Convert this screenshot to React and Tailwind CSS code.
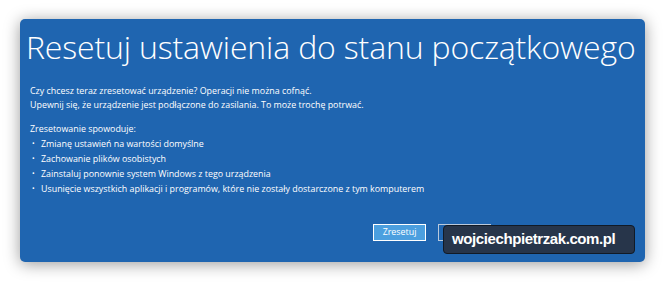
export default function App() {
  const items = [
    "Zmianę ustawień na wartości domyślne",
    "Zachowanie plików osobistych",
    "Zainstaluj ponownie system Windows z tego urządzenia",
    "Usunięcie wszystkich aplikacji i programów, które nie zostały dostarczone z tym komputerem",
  ];

  return (
    <div className="w-[665px] h-[283px] bg-white pl-[20px] pt-[19px] font-['Open_Sans',sans-serif]">
      <div className="relative w-[625px] h-[243px] rounded-[5px] bg-[#1f65b0] text-white shadow-[0_2px_16px_rgba(0,0,0,0.4)] flex flex-col">
        <h1 className="pl-[6px] pt-[8px] text-[32px] leading-[40px] font-light tracking-[-0.15px] whitespace-nowrap">
          Resetuj ustawienia do stanu początkowego
        </h1>

        <div className="pl-[10px] pt-[17px] text-[8.9px] leading-[14px]">
          <p>Czy chcesz teraz zresetować urządzenie? Operacji nie można cofnąć.</p>
          <p>Upewnij się, że urządzenie jest podłączone do zasilania. To może trochę potrwać.</p>
        </div>

        <div className="pl-[10px] pt-[9px] text-[8.9px] leading-[15px]">
          <p>Zresetowanie spowoduje:</p>
          <ul>
            {items.map((item) => (
              <li key={item} className="flex items-center">
                <span className="w-[11px] pl-[2px] text-[7px]">•</span>
                <span>{item}</span>
              </li>
            ))}
          </ul>
        </div>

        <div className="flex-1" />

        <div className="flex justify-end gap-[12px] pr-[154px] pb-[21px]">
          <button className="w-[53px] h-[17px] border border-white bg-[#4b9fdf] text-[8.9px] leading-none text-white">
            Zresetuj
          </button>
          <button className="w-[53px] h-[17px] border border-[#b9c9dc] text-[8.9px] leading-none text-[#8d9fb6]">
            Anuluj
          </button>
        </div>

        <div className="absolute left-[423px] top-[206px] w-[192px] h-[29px] rounded-[4px] bg-[#27354a] border border-[#111a26] flex items-center pl-[8px] text-[15px] font-bold text-white tracking-[-0.4px] font-['Liberation_Sans',sans-serif]">
          wojciechpietrzak.com.pl
        </div>
      </div>
    </div>
  );
}
